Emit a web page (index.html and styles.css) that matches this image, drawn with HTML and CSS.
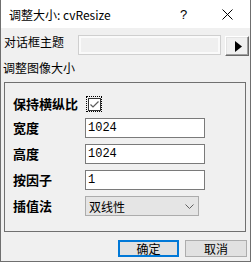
FILE: index.html
```html
<!DOCTYPE html>
<html>
<head>
<meta charset="utf-8">
<link rel="stylesheet" href="styles.css">
</head>
<body>
<div class="window">
  <div class="titlebar">
    <span class="title">调整大小: cvResize</span>
    <span class="help">?</span>
    <svg class="close" width="11" height="11" viewBox="0 0 11 11"><path d="M0.5 0.5 L10.5 10.5 M10.5 0.5 L0.5 10.5" stroke="#000" stroke-width="1" fill="none"/></svg>
  </div>
  <div class="theme-row">
    <span class="theme-label">对话框主题</span>
    <div class="theme-box"></div>
    <div class="theme-btn"><svg width="7" height="11" viewBox="0 0 7 11"><path d="M0 0 L7 5.5 L0 11 Z" fill="#000"/></svg></div>
  </div>
  <div class="section-label">调整图像大小</div>
  <div class="group">
    <div class="row row-check">
      <span class="label">保持横纵比</span>
      <span class="check-focus"><span class="check"><svg width="11" height="11" viewBox="0 0 11 11"><path d="M1.5 5.5 L4 8 L9.5 2.5" stroke="#5a5a5a" stroke-width="1.2" fill="none"/></svg></span></span>
    </div>
    <div class="row">
      <span class="label">宽度</span>
      <div class="input">1024</div>
    </div>
    <div class="row">
      <span class="label">高度</span>
      <div class="input">1024</div>
    </div>
    <div class="row">
      <span class="label">按因子</span>
      <div class="input">1</div>
    </div>
    <div class="row">
      <span class="label">插值法</span>
      <div class="select"><span>双线性</span><svg width="9" height="5" viewBox="0 0 9 5"><path d="M0.5 0.5 L4.5 4.5 L8.5 0.5" stroke="#606060" stroke-width="1" fill="none"/></svg></div>
    </div>
  </div>
  <div class="footer">
    <div class="btn btn-default">确定</div>
    <div class="btn">取消</div>
  </div>
</div>
</body>
</html>
```
FILE: styles.css
```css
html, body {
  margin: 0;
  padding: 0;
  background: #f0f0f0;
}
.window {
  width: 251px;
  height: 262px;
  box-sizing: border-box;
  border-left: 1px solid #6f6f6f;
  border-right: 1px solid #6f6f6f;
  border-bottom: 1px solid #6f6f6f;
  background: #f0f0f0;
  font-family: "Noto Sans CJK SC", "Liberation Sans", sans-serif;
  font-size: 12px;
  color: #000;
  display: flex;
  flex-direction: column;
  overflow: hidden;
}
.titlebar {
  height: 28px;
  background: #fff;
  display: flex;
  align-items: center;
  padding-left: 9px;
  margin: 0 -1px;
  position: relative;
}
.title {
  font-size: 12px;
  line-height: 14px;
  width: 170px;
  padding-top: 1px;
}
.help {
  font-family: "Liberation Sans", sans-serif;
  font-size: 13px;
  width: 42px;
  padding-left: 1px;
}
.close {
  display: block;
}
.theme-row {
  margin-top: 7px;
  height: 20px;
  display: flex;
  align-items: flex-start;
  padding-left: 3px;
}
.theme-label {
  width: 74px;
  line-height: 14px;
  margin-top: 0px;
}
.theme-box {
  width: 143px;
  height: 20px;
  box-sizing: border-box;
  border: 1px solid #cfcfcf;
  box-shadow: inset 0 0 0 2px #fafafa;
  background: #efefef;
}
.theme-btn {
  margin-left: 4px;
  margin-top: 1px;
  width: 24px;
  height: 20px;
  box-sizing: border-box;
  border-top: 1px solid #fff;
  border-left: 1px solid #fff;
  border-right: 1px solid #696969;
  border-bottom: 1px solid #696969;
  box-shadow: inset -1px -1px 0 #a0a0a0, inset 1px 1px 0 #e3e3e3;
  display: flex;
  align-items: center;
  justify-content: center;
  padding-left: 2px;
}
.section-label {
  margin-top: 6px;
  padding-left: 2px;
  line-height: 14px;
  height: 14px;
}
.group {
  margin-top: 7px;
  margin-left: 3px;
  width: 242px;
  height: 150px;
  box-sizing: border-box;
  border: 1px solid #707070;
  padding: 11px 0 0 8px;
  display: flex;
  flex-direction: column;
  gap: 6px;
}
.row {
  height: 20px;
  display: flex;
  align-items: center;
}
.row-check {
  margin-bottom: -2px;
}
.label {
  width: 72px;
  font-weight: bold;
  font-size: 13px;
  line-height: 14px;
}
.check-focus {
  width: 16px;
  height: 16px;
  box-sizing: border-box;
  border: 1px dotted #000;
  display: flex;
  align-items: center;
  justify-content: center;
  margin-left: 1px;
}
.check {
  width: 13px;
  height: 13px;
  box-sizing: border-box;
  border: 1px solid #333;
  background: #fff;
  display: flex;
  align-items: center;
  justify-content: center;
}
.check svg {
  display: block;
}
.input {
  width: 120px;
  height: 20px;
  box-sizing: border-box;
  border: 1px solid #7a7a7a;
  background: #fff;
  font-family: "Liberation Mono", monospace;
  font-size: 12px;
  line-height: 18px;
  padding-left: 2px;
}
.select {
  width: 114px;
  height: 20px;
  box-sizing: border-box;
  border: 1px solid #acacac;
  background: #e5e5e5;
  display: flex;
  align-items: center;
  justify-content: space-between;
  padding: 0 4px 0 3px;
  font-size: 12px;
}
.select svg {
  display: block;
}
.footer {
  margin-top: 8px;
  display: flex;
  justify-content: flex-end;
  gap: 6px;
  padding-right: 3px;
}
.btn {
  width: 62px;
  height: 17px;
  box-sizing: border-box;
  border: 1px solid #adadad;
  background: #e1e1e1;
  display: flex;
  align-items: center;
  justify-content: center;
  font-size: 12px;
  line-height: 14px;
}
.btn-default {
  width: 61px;
  border: 2px solid #0078d7;
}
```
